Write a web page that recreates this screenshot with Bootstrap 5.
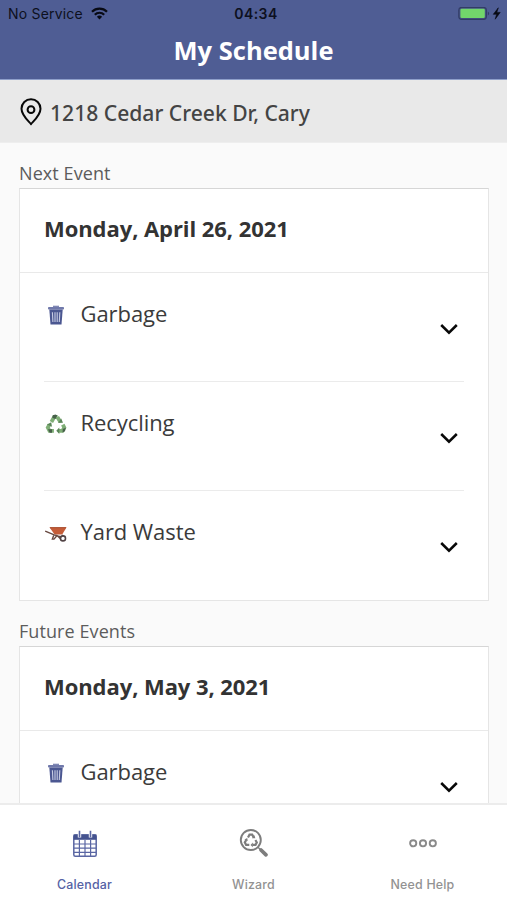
<!DOCTYPE html>
<html lang="en">
<head>
<meta charset="utf-8">
<meta name="viewport" content="width=device-width, initial-scale=1">
<title>My Schedule</title>
<link href="https://cdn.jsdelivr.net/npm/bootstrap@5.3.0/dist/css/bootstrap.min.css" rel="stylesheet">
<style>
  body { font-family: "Open Sans", "Noto Sans", sans-serif; background: #fafafa; color: #333; }
  svg { display: block; flex: none; }
  .app-head { background: #4f5d94; height: 80px; border-bottom: 1px solid #8f9fca; }
  .status { height: 27px; font: 14px/27px Inter, sans-serif; color: #0d1020; padding: 0 5px 0 8px; }
  .status > div { flex: 1 1 0; }
  .status .clock { font-weight: 600; letter-spacing: .45px; font-size: 14px; padding-left: 2px; }
  .carrier { letter-spacing: .2px; }
  .app-title { font-size: 25.5px; line-height: 46px; font-weight: 700; color: #fff; }
  .address { background: #e9e9e9; height: 63px; padding: 2px 0 0 20px; font-family: "Noto Sans", sans-serif; font-size: 21.1px; font-weight: 500; color: #444; border-bottom: 1px solid #eee; }
  .address-text { line-height: 30px; padding-top: 2px; }
  .schedule { padding: 0 18px 0 19px; min-height: 0; }
  .section-label { font-size: 18px; letter-spacing: .08px; line-height: 28px; height: 45px; padding-top: 16px; color: #5c5c5c; font-weight: 400; }
  .event-card { height: 413px; flex: none; border: 1px solid #e5e5e5; border-top-color: #d6d6d6; border-radius: 0; }
  .event-date { flex: none; height: 83px; padding: 0 24px; font-size: 22px; letter-spacing: -.07px; line-height: 78px; font-weight: 700; }
  .event-list { border-top: 1px solid #e9e9e9; padding: 0 24px; }
  .event-row { height: 109.2px; border-bottom: 1px solid #ebebeb; padding-right: 6px; }
  .event-row > svg { margin-top: 3px; }
  .event-row:last-child { border-bottom: 0; }
  .event-name { font-size: 22px; letter-spacing: -.07px; line-height: 30px; padding-top: 24.5px; color: #3b3b3b; gap: 12.5px; }
  .event-icon { width: 24px; height: 24px; margin-top: 5px; }
  .tab-bar { height: 97px; background: #fff; border-top: 2px solid #ececec; }
  .tab { color: #929292; font: 500 12.4px/16px Inter, sans-serif; letter-spacing: .2px; padding-top: 22px; }
  .tab.on { color: #5562a5; }
  .tab svg { height: 34px; margin-bottom: 16px; }
</style>
<script src="https://cdn.jsdelivr.net/npm/bootstrap@5.3.0/dist/js/bootstrap.bundle.min.js"></script>
</head>
<body class="vh-100 d-flex flex-column overflow-hidden">

<svg width="0" height="0" class="position-absolute" aria-hidden="true">
  <defs>
    <symbol id="trash" viewBox="0 0 24 24">
      <path d="M9 3.5h6" stroke="#8088b4" stroke-width="1.6"/>
      <rect x="4" y="4" width="16" height="2.6" rx=".8" fill="#7079ab"/>
      <path d="M5.3 6.5h13.4L17.5 21.5H6.5z" fill="#4b5791"/>
      <path d="M8.4 9.3l.5 9.7M11 9.3V19M13.2 9.3V19M15.8 9.3l-.5 9.7" stroke="#c7cce4" stroke-width="1.1"/>
    </symbol>
    <symbol id="recycle" viewBox="0 0 24 24">
      <g fill="none" stroke="#7fae76" stroke-width="3.8">
        <path d="M7.4 10L10.2 5h3.4"/>
        <path d="M13.3 4.9l2.8 4.6"/>
        <path d="M18.8 12.6l1.5 3-1.9 3.2h-4"/>
        <path d="M9.9 18.8H5.5l-1.7-3.2 1.6-3"/>
      </g>
      <path d="M14 11l5-.2-1.8-4.4zM15.3 15.4l-3 3.4 3 3.2zM8 14.8l-.8-4.6L3 12.4z" fill="#5a8558"/>
      <path d="M8.8 3.2l2.7-.7 1.8 1-2 3.6-3-1.4zM18.8 17l3-1.3-.8 3.5-2.5 1.4zM4 17.2h4v3.5H5.6z" fill="#47604a"/>
    </symbol>
    <symbol id="barrow" viewBox="0 0 24 24">
      <path d="M5.4 6.2H22.6l-4.4 7.4h-7.6z" fill="#c45c38"/>
      <path d="M6 6.7h16" stroke="#a84f30" stroke-width="1"/>
      <path d="M1.2 10.2l9 3.6 8 2.4M10 13.6l-1.6 4.5h1.6l3-3.5 3 2.7 3.2-3.4" fill="none" stroke="#66473f" stroke-width="1.4"/>
      <circle cx="19" cy="17.4" r="2.5" fill="#fff" stroke="#514345" stroke-width="1.6"/>
    </symbol>
    <symbol id="chevron" viewBox="0 0 18 12">
      <path d="M1.2 2l7.8 7.7L16.8 2" fill="none" stroke="#080808" stroke-width="2.5"/>
    </symbol>
  </defs>
</svg>

<header class="app-head flex-shrink-0">
  <div class="status d-flex align-items-center">
    <div class="d-flex align-items-center gap-2">
      <span class="carrier">No Service</span>
      <svg width="17" height="13" viewBox="0 0 17 13"><g fill="none" stroke="#080a14" stroke-width="2.2"><path d="M1 4.8a10.6 10.6 0 0 1 15 0M3.8 7.7a6.6 6.6 0 0 1 9.4 0"/></g><path d="M5.9 9.7a3.7 3.7 0 0 1 5.2 0l-2.6 2.7z" fill="#080a14"/></svg>
    </div>
    <span class="clock">04:34</span>
    <div class="d-flex align-items-center justify-content-end">
      <svg width="44" height="14" viewBox="0 0 44 14"><rect x=".8" y=".4" width="27.6" height="12" rx="2.8" fill="#465384" stroke="#323c65" stroke-width="1.1"/><rect x="2.4" y="1.8" width="24.4" height="9.2" rx="1.3" fill="#72d66b"/><path d="M29.8 4.5a2.2 2.2 0 0 1 0 4z" fill="#323c65"/><path d="M40.3.8l-5 6.5h3.3l-1.4 4.9 5-6.8h-3.4z" fill="#080a14" stroke="#080a14" stroke-width=".6"/></svg>
    </div>
  </div>
  <h1 class="app-title text-center m-0">My Schedule</h1>
</header>

<div class="address d-flex align-items-center flex-shrink-0">
  <svg width="22" height="28" viewBox="0 0 22 28" class="me-2"><path d="M11 26C7.8 22.4 1.5 17 1.5 10.7a9.5 9.5 0 0 1 19 0C20.5 17 14.2 22.4 11 26z" fill="none" stroke="#080808" stroke-width="2"/><circle cx="11" cy="11.7" r="3.4" fill="none" stroke="#080808" stroke-width="2"/></svg>
  <span class="address-text">1218 Cedar Creek Dr, Cary</span>
</div>

<main class="schedule flex-grow-1 d-flex flex-column overflow-hidden">
  <h2 class="section-label m-0 flex-shrink-0">Next Event</h2>
  <section class="card event-card">
    <div class="event-date">Monday, April 26, 2021</div>
    <div class="event-list">
      <div class="event-row d-flex justify-content-between"><div class="event-name d-flex"><svg class="event-icon"><use href="#trash"/></svg>Garbage</div><svg width="18" height="12" class="align-self-center"><use href="#chevron"/></svg></div>
      <div class="event-row d-flex justify-content-between"><div class="event-name d-flex"><svg class="event-icon"><use href="#recycle"/></svg>Recycling</div><svg width="18" height="12" class="align-self-center"><use href="#chevron"/></svg></div>
      <div class="event-row d-flex justify-content-between"><div class="event-name d-flex"><svg class="event-icon"><use href="#barrow"/></svg>Yard Waste</div><svg width="18" height="12" class="align-self-center"><use href="#chevron"/></svg></div>
    </div>
  </section>
  <h2 class="section-label m-0 flex-shrink-0">Future Events</h2>
  <section class="card event-card">
    <div class="event-date">Monday, May 3, 2021</div>
    <div class="event-list">
      <div class="event-row d-flex justify-content-between"><div class="event-name d-flex"><svg class="event-icon"><use href="#trash"/></svg>Garbage</div><svg width="18" height="12" class="align-self-center"><use href="#chevron"/></svg></div>
    </div>
  </section>
</main>

<nav class="tab-bar row g-0 flex-shrink-0">
  <div class="tab on col d-flex flex-column align-items-center">
    <svg width="26" viewBox="0 0 26 34"><g fill="none" stroke="#5a66a3" stroke-width="1.5"><rect x="1.8" y="8" width="22.4" height="21.3" rx="1.5"/><path d="M2 17h22M2 21.2h22M2 25.3h22M7.4 13v16M13 13v16M18.6 13v16" stroke-width="1.2"/></g><path d="M1.6 7.4h22.8v5.4H1.6z" fill="#44528f"/><path d="M7.5 6v4.5M18.5 6v4.5" stroke="#fff" stroke-width="3.4"/><path d="M7.5 3.8v6.4M18.5 3.8v6.4" stroke="#5a66a3" stroke-width="1.6"/></svg>
    Calendar
  </div>
  <div class="tab col d-flex flex-column align-items-center">
    <svg width="30" viewBox="0 0 30 34"><g fill="none" stroke="#7d7d7d"><circle cx="11.8" cy="13" r="10" stroke-width="1.9"/><path d="M22 23l5 4.8" stroke-width="3.8" stroke-linecap="round"/><path d="M19 20.3l2.6 2.5" stroke-width="1.4"/><path d="M9 10.5l1.5-2.8h2.7l1.6 2.8M16.4 13l1.4 2.4-1.3 2.4h-3M10.3 17.8H7.1l-1.3-2.4L7.3 13" stroke-width="2.2"/></g><path d="M13 11.3h3.4l-1.2-3.2zM13.8 15.6L11.5 18l2.3 2.3zM8.8 14l-.6-3-2.8 1.6z" fill="#7d7d7d"/></svg>
    Wizard
  </div>
  <div class="tab col d-flex flex-column align-items-center">
    <svg width="28" viewBox="0 0 28 34"><g fill="none" stroke="#8a8a8a" stroke-width="1.9"><circle cx="4.2" cy="16.3" r="3.1"/><circle cx="14" cy="16.3" r="3.1"/><circle cx="23.8" cy="16.3" r="3.1"/></g></svg>
    Need Help
  </div>
</nav>
</body>
</html>
